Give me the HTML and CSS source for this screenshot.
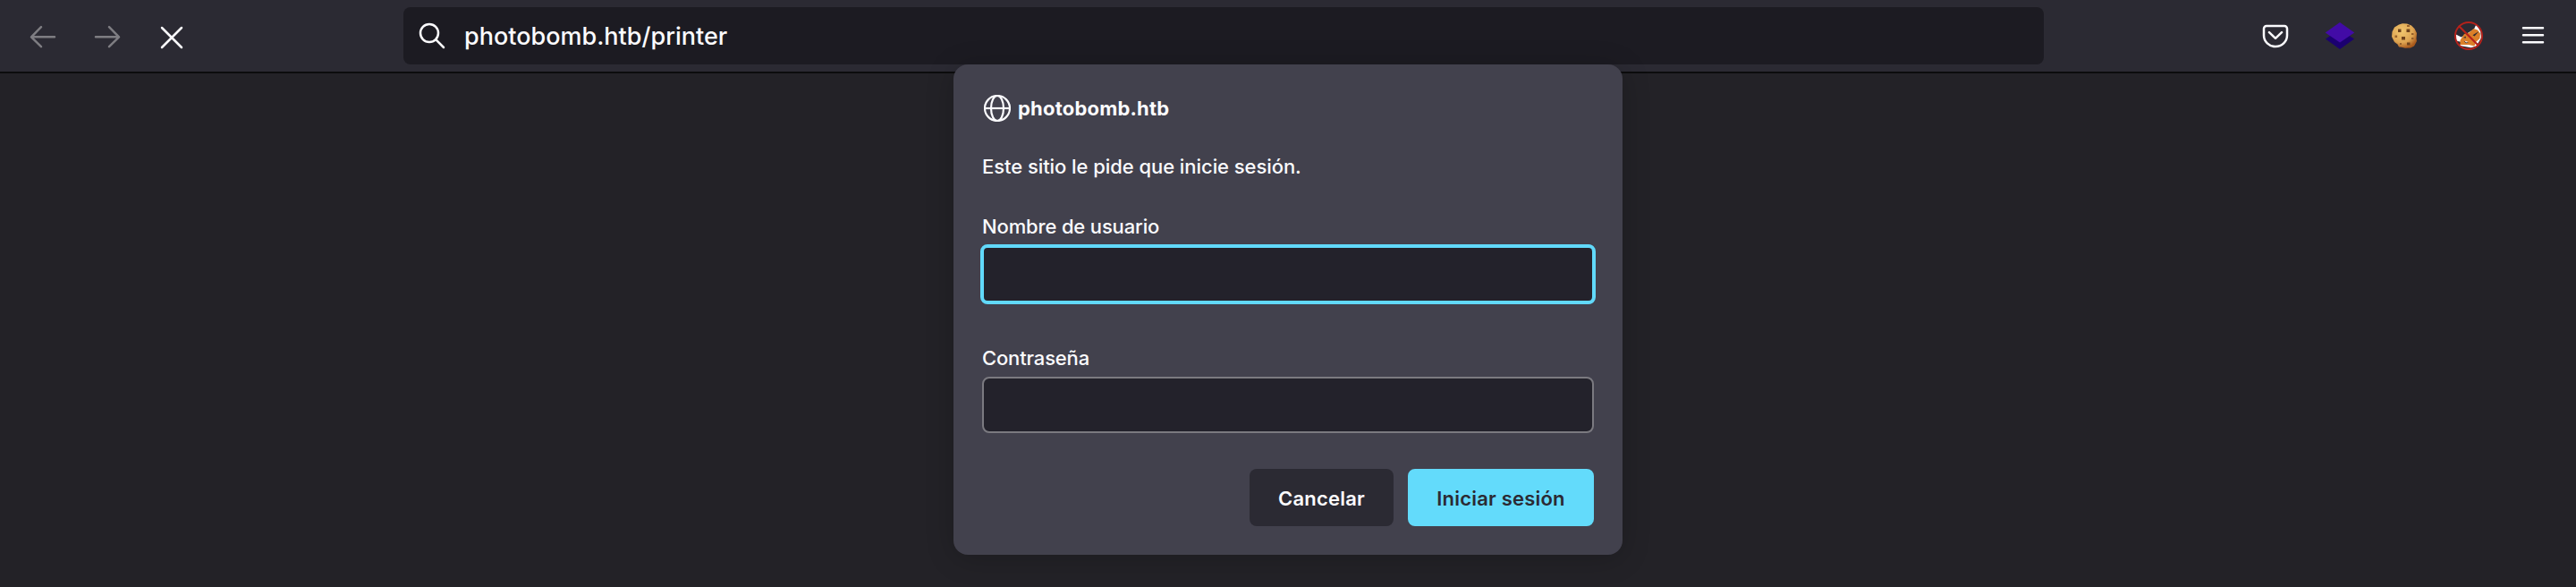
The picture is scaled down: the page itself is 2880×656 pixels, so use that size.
FILE: index.html
```html
<!DOCTYPE html>
<html lang="es">
<head>
<meta charset="utf-8">
<title>photobomb.htb/printer</title>
<link rel="stylesheet" href="styles.css">
</head>
<body>
<header class="toolbar">
  <nav class="nav">
    <svg class="icon dim" viewBox="0 0 32 32"><path d="M29 17.3H3.5M14 6.2L3 17.3l11 10.8"/></svg>
    <svg class="icon dim" viewBox="0 0 32 32"><path d="M3 17.3h25.5M18 6.2l11 11.1-11 10.8"/></svg>
    <svg class="icon" viewBox="0 0 32 32"><path d="M5 7l22 22M27 7L5 29"/></svg>
  </nav>
  <div class="urlbar">
    <svg class="icon" viewBox="0 0 32 32"><circle cx="13" cy="13" r="10"/><path d="M20.2 20.2l8.800 8.800"/></svg>
    <span class="url">photobomb.htb/printer</span>
  </div>
  <div class="tools">
    <svg class="icon" viewBox="0 0 32 32"><path d="M6 5h20a3 3 0 0 1 3 3v7.500a13 12.500 0 0 1-26 0V8a3 3 0 0 1 3-3z"/><path d="M9 12.200l7 6.600 7-6.600"/></svg>
    <svg class="icon solid" viewBox="0 0 32 32"><path fill="#1b0070" d="M0 19.500L16 9l16 10.500L16 31z"/><path fill="#420ba6" d="M16 1l16.300 11.500L16 23.500-.3 12.500z"/></svg>
    <svg class="icon solid" viewBox="0 0 32 32">
      <defs><radialGradient id="dough" cx=".4" cy=".32" r=".7"><stop offset="0" stop-color="#f1c66e"/><stop offset=".65" stop-color="#dda452"/><stop offset="1" stop-color="#aa5a1c"/></radialGradient></defs>
      <path fill="url(#dough)" d="M10 3.500l4-1.300 5 .3 5 2 3.500 3.500 2.500 5-.5 6 .5 3-3 5.500-4 2-6 .3-4-1-3-.2-1.500-3-3.500-2.500L2 17l.500-5.500L5 6.500z"/>
      <path fill="#6e421c" d="M9 8.500h3.500V12H9zM18.500 8.500h3.800v3.600h-3.800zM13 17h4v3.500h-4zM19 23.500h3.500v3H19z"/>
      <path fill="#96602b" d="M5.500 15.500h2.600v2.600H5.500zM24 13h2.500v2H24zM24 18h2.500v2H24zM11 24h2v2h-2zM19 4h3v2h-3z"/>
    </svg>
    <svg class="icon solid" viewBox="0 0 32 32">
      <path fill="#fff" d="M22 8.500L24.500 3l5 8.500.5 7-5.500 9-6 1.700L6 27l2-4-6.200-1.500V14.500l6 3z"/>
      <path fill="#db7f29" d="M6.500 21l4.500-7 5.500-1.500 5-4.500 4.500 1.500 3 4-.5 5.500-4.500 4-1.500 4.500-6.500-1.500L6.500 26z"/>
      <path fill="#2b2a33" d="M10 18.300l2.500-1.800.5 2zM20.500 15.200l7-4.200-5 5.500zM24.500 26.500l2.500-2v2zM10.500 21.700l5.500 2-3 .5z"/>
      <path fill="#fff" d="M11.500 21.500l4 1.500-2.500.5z"/>
      <circle cx="16" cy="16" r="15" fill="none" stroke="#b5221b" stroke-width="2"/>
      <path d="M5.500 5.500l21 21" stroke="#b5221b" stroke-width="2.200"/>
    </svg>
    <svg class="icon" viewBox="0 0 32 32"><path d="M5 7.200h22M5 15.200h22M5 23.200h22"/></svg>
  </div>
</header>
<main class="page">
  <form class="dialog">
    <div class="site">
      <svg class="globe" viewBox="0 0 30 30"><circle cx="15" cy="15" r="14"/><ellipse cx="15" cy="15" rx="7" ry="14"/><path d="M1 15h28"/></svg>
      <span class="host">photobomb.htb</span>
    </div>
    <p class="message">Este sitio le pide que inicie sesión.</p>
    <label class="label user-label" for="user">Nombre de usuario</label>
    <input class="field focused" id="user" type="text">
    <label class="label pass-label" for="pass">Contraseña</label>
    <input class="field" id="pass" type="password">
    <div class="actions">
      <button class="button cancel" type="button">Cancelar</button>
      <button class="button primary" type="button">Iniciar sesión</button>
    </div>
  </form>
</main>
</body>
</html>
```

FILE: styles.css
```css
* { box-sizing: border-box; }

body {
  margin: 0;
  height: 656px;
  display: flex;
  flex-direction: column;
  overflow: hidden;
  background: #232227;
  color: #fbfbfe;
  font-family: Inter, "Liberation Sans", sans-serif;
  font-size: 22px;
  font-weight: 500;
}

.toolbar {
  display: flex;
  align-items: center;
  height: 82px;
  flex: none;
  padding: 0 32px;
  background: #2b2a33;
  border-bottom: 2px solid #0c0c0d;
}

.nav { display: flex; gap: 40px; width: 419px; }
.tools { display: flex; gap: 40px; margin-left: auto; }

.icon {
  width: 32px;
  height: 32px;
  flex: none;
  overflow: visible;
  fill: none;
  stroke: #fbfbfe;
  stroke-width: 2.5;
  stroke-linecap: round;
  stroke-linejoin: round;
}
.icon.dim { stroke: #7e7d82; }
.icon.solid { stroke: none; }

.urlbar {
  display: flex;
  align-items: center;
  gap: 20px;
  width: 1834px;
  height: 64px;
  padding-left: 16px;
  border-radius: 8px;
  background: #1c1b22;
}
.url { font-size: 27px; line-height: 32px; padding-top: 2px; }

.page { position: relative; flex: 1; }

.dialog {
  position: absolute;
  top: -10px;
  left: 1066px;
  width: 748px;
  height: 548px;
  padding: 32px;
  display: flex;
  flex-direction: column;
  border-radius: 16px;
  background: #42414d;
  box-shadow: 0 4px 32px rgba(0, 0, 0, 0.2);
}
.dialog > * { flex: none; }

.site { display: flex; align-items: center; gap: 8px; height: 34px; padding-left: 2px; }
.globe { width: 30px; height: 30px; fill: none; stroke: #fbfbfe; stroke-width: 2.2; }
.host { font-weight: 700; line-height: 28px; letter-spacing: 0.2px; }
.message { margin: 34px 0 0; line-height: 28px; letter-spacing: -0.06px; }
.label { line-height: 28px; letter-spacing: -0.15px; }
.user-label { margin-top: 39px; }
.pass-label { margin-top: 46px; }

.field {
  width: 684px;
  height: 63px;
  margin: 7px 0 0;
  border: 2px solid #7b7a80;
  border-radius: 8px;
  background: #23222b;
  outline: none;
}
.field.focused {
  width: 688px;
  height: 67px;
  margin: 6px -2px 0;
  border: 4px solid #61d9fa;
}

.actions { display: flex; justify-content: flex-end; gap: 16px; margin-top: 40px; }
.button {
  height: 64px;
  padding: 2px 0 0;
  border: 0;
  border-radius: 8px;
  font: 600 22px/28px Inter, "Liberation Sans", sans-serif;
  letter-spacing: 0.2px;
}
.cancel { width: 161px; background: #2b2a33; color: #fbfbfe; }
.primary { width: 208px; background: #63dbfb; color: #2b2a33; }
```
